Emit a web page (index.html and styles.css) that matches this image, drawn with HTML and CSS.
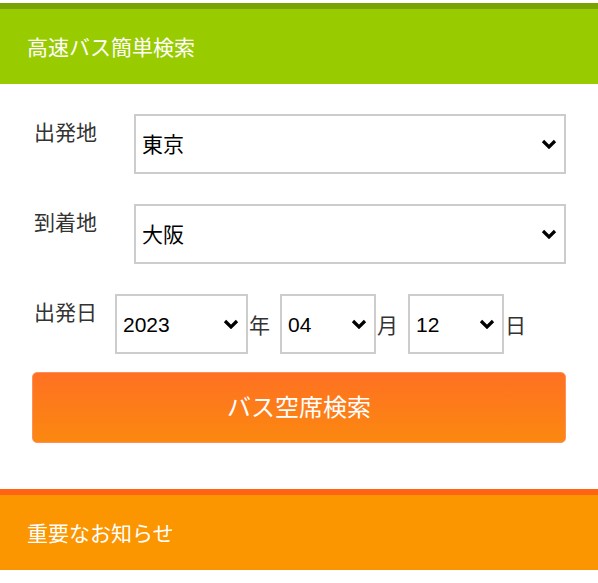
FILE: index.html
```html
<!DOCTYPE html>
<html lang="ja">
<head>
    <meta charset="UTF-8">
    <meta name="viewport" content="width=device-width, initial-scale=1.0">
    <title>高速バス簡単検索</title>
    <link rel="stylesheet" href="styles.css">
</head>
<body>
    <div class="page">
        <section class="panel search-panel">
            <h2 class="panel-title">高速バス簡単検索</h2>
            <form class="search-form" id="searchForm">
                <div class="form-row">
                    <label class="form-label" for="from">出発地</label>
                    <select class="form-select wide" id="from" name="from">
                        <option>東京</option>
                        <option>大阪</option>
                        <option>名古屋</option>
                    </select>
                </div>
                <div class="form-row">
                    <label class="form-label" for="to">到着地</label>
                    <select class="form-select wide" id="to" name="to">
                        <option>大阪</option>
                        <option>東京</option>
                        <option>名古屋</option>
                    </select>
                </div>
                <div class="form-row">
                    <label class="form-label date-label" for="year">出発日</label>
                    <div class="date-group">
                        <select class="form-select year" id="year" name="year">
                            <option>2023</option>
                            <option>2024</option>
                        </select>
                        <span class="unit">年</span>
                        <select class="form-select small" id="month" name="month">
                            <option>04</option>
                            <option>05</option>
                        </select>
                        <span class="unit">月</span>
                        <select class="form-select small" id="day" name="day">
                            <option>12</option>
                            <option>13</option>
                        </select>
                        <span class="unit">日</span>
                    </div>
                </div>
                <button type="submit" class="search-btn">バス空席検索</button>
            </form>
        </section>
        <section class="panel notice-panel">
            <h2 class="panel-title">重要なお知らせ</h2>
        </section>
    </div>
</body>
</html>
```

FILE: styles.css
```css
body {
    margin: 0;
    background: #fff;
    font-family: "Noto Sans CJK JP", "Liberation Sans", sans-serif;
    color: #333;
}

.page {
    padding-top: 3px;
}

.panel-title {
    margin: 0;
    height: 75px;
    line-height: 74px;
    padding-left: 27px;
    font-size: 21px;
    font-weight: normal;
    color: #fff;
}

.search-panel .panel-title {
    background-color: #99cc00;
    border-top: 6px solid #7ba300;
}

.notice-panel .panel-title {
    background-color: #fb9500;
    border-top: 6px solid #ff6414;
}

.search-form {
    padding: 30px 32px 46px 32px;
    display: flex;
    flex-direction: column;
    gap: 30px;
}

.form-row {
    display: flex;
    align-items: flex-start;
}

.form-label {
    width: 102px;
    flex-shrink: 0;
    padding: 2px 0 0 2px;
    box-sizing: border-box;
    font-size: 21px;
    line-height: 30px;
    color: #333;
}

.form-label.date-label {
    width: 83px;
}

.form-select {
    appearance: none;
    -webkit-appearance: none;
    height: 60px;
    margin: 0;
    border: 2px solid #ccc;
    border-radius: 0;
    background: #fff url("data:image/svg+xml;utf8,<svg xmlns='http://www.w3.org/2000/svg' width='16' height='10' viewBox='0 0 16 10'><path d='M2 2 L8 8 L14 2' fill='none' stroke='%23000' stroke-width='3.2'/></svg>") no-repeat right 7px center / 16px 10px;
    padding: 0 30px 0 6px;
    font-family: "Liberation Sans", "Noto Sans CJK JP", sans-serif;
    font-size: 21px;
    color: #000;
}

.form-select.wide {
    width: 432px;
}

.form-select.year {
    width: 133px;
}

.form-select.small {
    width: 96px;
}

.date-group {
    display: flex;
    align-items: center;
}

.unit {
    font-size: 21px;
    margin: 0 10px 0 1px;
    color: #333;
}

.search-btn {
    margin-top: -12px;
    height: 71px;
    width: 100%;
    padding: 0 0 4px;
    border: 1px solid #ff8f5c;
    border-radius: 5px;
    background: linear-gradient(#ff7122, #fb8810);
    color: #fff;
    font-family: "Noto Sans CJK JP", sans-serif;
    font-size: 24px;
    cursor: pointer;
}

.search-btn:hover {
    background: #ff6a10;
}
```
